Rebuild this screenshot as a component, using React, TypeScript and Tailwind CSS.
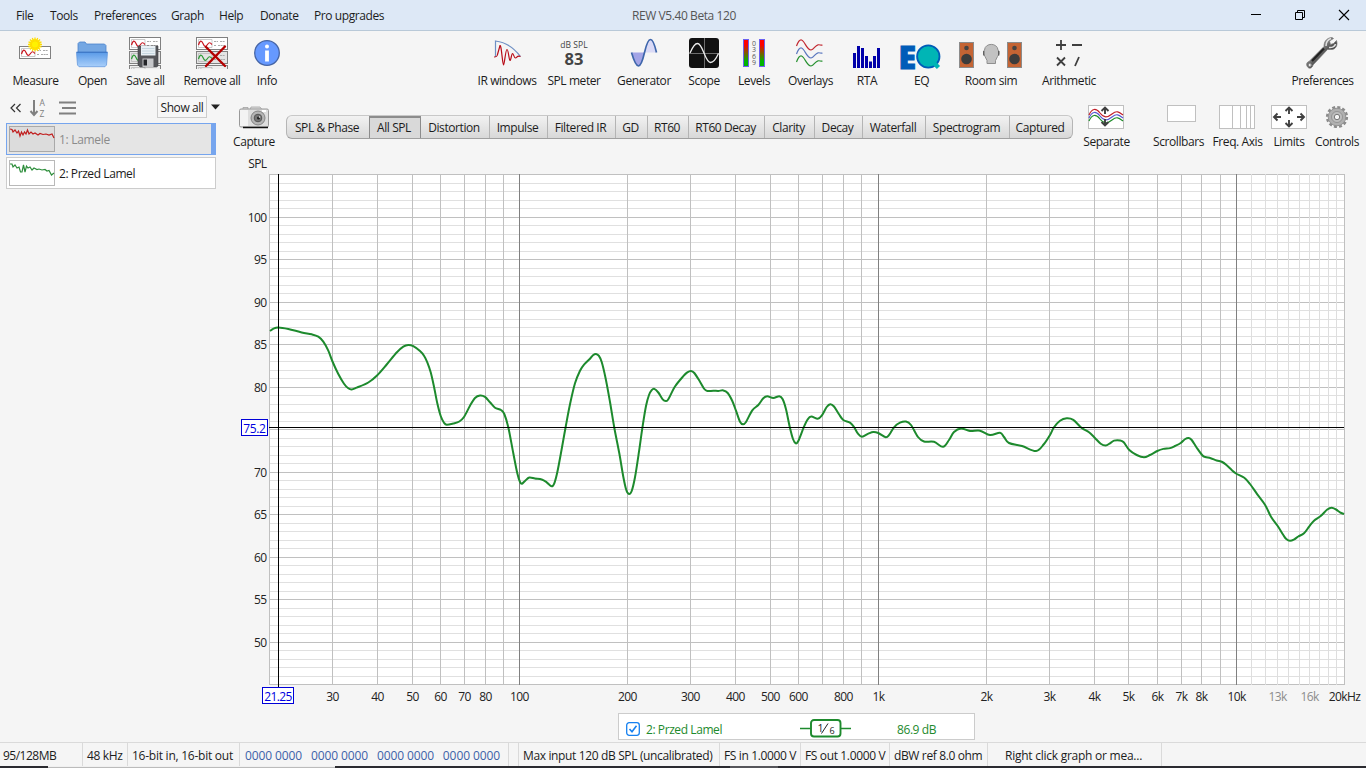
import type { ReactNode } from "react";

const MENU = [
  { name: "File", width: "w-[18px]" },
  { name: "Tools", width: "w-[28px]" },
  { name: "Preferences", width: "w-[61px]" },
  { name: "Graph", width: "w-[32px]" },
  { name: "Help", width: "w-[25px]" },
  { name: "Donate", width: "w-[38px]" },
  { name: "Pro upgrades", width: "w-[70px]" },
];

const TABS = [
  { name: "SPL & Phase", width: "w-[83px]" },
  { name: "All SPL", width: "w-[52px]" },
  { name: "Distortion", width: "w-[68px]" },
  { name: "Impulse", width: "w-[58px]" },
  { name: "Filtered IR", width: "w-[68px]" },
  { name: "GD", width: "w-[32px]" },
  { name: "RT60", width: "w-[41px]" },
  { name: "RT60 Decay", width: "w-[76px]" },
  { name: "Clarity", width: "w-[50px]" },
  { name: "Decay", width: "w-[48px]" },
  { name: "Waterfall", width: "w-[63px]" },
  { name: "Spectrogram", width: "w-[84px]" },
  { name: "Captured", width: "w-[64px]" },
];

const CURVE: [number, number][] = [
  [270, 331], [273.5, 328.6], [278.3, 327.5], [288.3, 329], [301.7, 332.4], [311.7, 334.3], [318.3, 336.7], [323.3, 341.7],
  [328.3, 350.7], [332.7, 362], [338.3, 374], [344, 383.7], [348.3, 388.3], [351.7, 389.5], [356.7, 387.7], [368.3, 382.5],
  [377.3, 375.2], [386.7, 364.5], [396.7, 352.5], [403.3, 346.7], [408.3, 345], [413.3, 346.2], [420, 351], [424, 355.7],
  [427.3, 362.3], [430.7, 372.3], [434, 386.7], [437.3, 403.3], [440.7, 416], [444, 422.7], [446.7, 424.8], [453.3, 423.5],
  [459.3, 421.5], [464, 417], [470, 405.7], [475, 398], [480, 395.5], [485, 396.9], [490, 402.3], [495, 407.7],
  [501, 410], [504.3, 414], [508.3, 427.3], [513.3, 453.3], [517.3, 473.3], [520, 482], [522, 483.7], [525, 480.9],
  [529.3, 477.5], [535, 478.5], [541.7, 479.5], [546.7, 482.3], [551.7, 486.3], [554.3, 483.3], [557.3, 472.3], [561.7, 449],
  [565.7, 426.7], [570, 404.3], [575, 383.3], [580, 370.7], [584, 364.7], [590, 358.7], [593.3, 355], [596, 353.9],
  [598.7, 355.6], [601.7, 362], [605.7, 378.7], [610, 402], [614.3, 427.7], [619.3, 453.3], [623.3, 476.7], [626.3, 490],
  [629, 494], [631.7, 491], [635, 477.3], [639, 451.7], [642.3, 428.3], [646, 406], [649, 395], [651.7, 390.2],
  [654.3, 388.9], [658.3, 392.5], [662.7, 399.3], [665.7, 401], [668.3, 399.3], [675, 386.5], [683.3, 376.2], [687.3, 372.4],
  [691, 371], [694.3, 373], [700, 381.7], [704.3, 389], [707.3, 391], [713.3, 390.7], [718.3, 390.9], [723.3, 390.4],
  [727.7, 393], [732.3, 401], [736, 410.7], [740, 421.7], [743, 424.3], [746, 422], [752.3, 410.3], [758.3, 405],
  [763.3, 398.3], [767.3, 396.3], [773.3, 398], [779.3, 396.2], [782.7, 399.3], [786, 409.3], [789.7, 426.7], [793, 439],
  [795.7, 443.3], [798.3, 441], [804, 426.7], [807.7, 419.3], [811.3, 416.6], [817.7, 418.7], [821.7, 415.7], [826.7, 407],
  [830.3, 404.2], [834, 406.5], [839, 414.3], [843.3, 420], [850, 422.7], [854, 427], [858, 433.7], [862, 436.7],
  [868.3, 433.7], [873.3, 431.9], [878.3, 433], [885.7, 437.3], [889.3, 434.7], [894, 427.3], [900, 422.7], [906, 421.5],
  [911, 425], [918, 437], [924, 441.5], [934, 441.8], [943, 446.8], [949, 440], [954, 432], [961, 428.5],
  [970, 431], [980, 430.7], [990, 435], [1000, 432.8], [1004, 437], [1009, 443], [1022, 446], [1036, 451], [1044, 444],
  [1050, 435], [1054, 427.3], [1060, 420.7], [1066.7, 418.3], [1073.3, 419.9], [1081.7, 428], [1089, 432.3], [1094.7, 437.7],
  [1100.7, 443.7], [1105.7, 445.5], [1110, 443.3], [1114, 440.6], [1120, 440.4], [1123.7, 442.3], [1129.3, 450], [1136.7, 455],
  [1144, 457.3], [1150, 455], [1157.3, 451], [1163.3, 448.9], [1170, 448.1], [1175, 446], [1180.7, 443], [1185.3, 439],
  [1188.7, 438], [1191.7, 440], [1196.7, 447.7], [1202.3, 455.3], [1205.3, 457], [1210.7, 458.2], [1216.7, 460.5], [1222.3, 462],
  [1226.7, 465.3], [1231.7, 470], [1236, 473.5], [1244.3, 477.7], [1250, 484], [1257.3, 494.3], [1265, 504.7], [1271, 516.7],
  [1277.7, 526], [1283.3, 535], [1286.3, 539], [1290, 540.8], [1294.3, 539.3], [1298.3, 536.5], [1304, 533.3], [1309.3, 526.3],
  [1314, 520.7], [1320.7, 516], [1327.3, 509.5], [1331.7, 507.8], [1336, 509.5], [1340, 512.3], [1344, 514],
];

// Catmull-Rom spline through the measured points
function smoothPath(pts: [number, number][]) {
  let d = `M${pts[0][0]} ${pts[0][1]}`;
  for (let i = 0; i < pts.length - 1; i++) {
    const p0 = pts[i - 1] ?? pts[i];
    const p1 = pts[i];
    const p2 = pts[i + 1];
    const p3 = pts[i + 2] ?? p2;
    d += `C${p1[0] + (p2[0] - p0[0]) / 6} ${p1[1] + (p2[1] - p0[1]) / 6} ${p2[0] - (p3[0] - p1[0]) / 6} ${p2[1] - (p3[1] - p1[1]) / 6} ${p2[0]} ${p2[1]}`;
  }
  return d;
}

const freqX = (f: number) => Math.round(269 + (1075 / 3) * Math.log10(f / 20));
const splY = (db: number) => Math.floor(217 + (100 - db) * 8.5);

const FREQS = [30, 40, 50, 60, 70, 80, 90, 100, 200, 300, 400, 500, 600, 700, 800, 900, 1000, 2000, 3000, 4000, 5000, 6000, 7000, 8000, 9000, 10000];
const MINOR_FREQS = [11000, 12000, 13000, 14000, 15000, 16000, 17000, 18000, 19000];
const LEVELS = Array.from({ length: 61 }, (_, i) => 105 - i);
const FREQ_LABELS: [number, string][] = [
  [30, "30"], [40, "40"], [50, "50"], [60, "60"], [70, "70"], [80, "80"], [100, "100"], [200, "200"], [300, "300"],
  [400, "400"], [500, "500"], [600, "600"], [800, "800"], [1000, "1k"], [2000, "2k"], [3000, "3k"], [4000, "4k"],
  [5000, "5k"], [6000, "6k"], [7000, "7k"], [8000, "8k"], [10000, "10k"], [13000, "13k"], [16000, "16k"], [20000, "20kHz"],
];

function Icon({ w = 32, h = 32, children }: { w?: number; h?: number; children: ReactNode }) {
  return (
    <svg width={w} height={h} viewBox={`0 0 ${w} ${h}`} fill="none" className="block shrink-0">
      {children}
    </svg>
  );
}

function MiniCard({ y, wave, fill = "#fff" }: { y: number; wave: string; fill?: string }) {
  return (
    <g transform={`translate(0 ${y})`}>
      <rect x="0.5" y="0.5" width="31" height="12" fill={fill} stroke="#808080" />
      <path d="M2.5 2.5H16V10.5H2.5Z" stroke="#b5b5b5" strokeWidth="0.7" />
      <path d="M2.5 8C4 3 5.500 3 7 6.500S9.500 10.500 11.500 7.500 14.500 6 16 7.500" stroke={wave} strokeWidth="1.2" />
      <path d="M18 4.500h4M24 4.500h5M18 8.500h2M22 8.500h7" stroke="#aaa" strokeDasharray="2 0.6" />
    </g>
  );
}

function MeasureIcon() {
  return (
    <Icon>
      <MiniCard y={9} wave="#c8141e" />
      <circle cx="16" cy="7.500" r="5.500" fill="#ffee00" />
      <path d="M16 0.500v14M9 7.500h14M11 2.500l10 10M21 2.500l-10 10M13.300 1l5.400 13M18.700 1l-5.400 13M9.500 4.800l13 5.400M9.500 10.200l13-5.400" stroke="#ffdc00" strokeWidth="1.300" />
      <circle cx="16" cy="7.500" r="3" fill="#fff200" />
    </Icon>
  );
}

function OpenIcon() {
  return (
    <Icon>
      <defs>
        <linearGradient id="folder" x1="0" y1="0" x2="0" y2="1">
          <stop offset="0" stopColor="#5b9be8" />
          <stop offset="1" stopColor="#a9cffa" />
        </linearGradient>
      </defs>
      <path d="M2 16V6.500L3.500 5H9L10.500 7H28.500L30 8.500V16Z" fill="#74a7e3" stroke="#4d83cb" strokeWidth="0.800" />
      <path d="M0.500 15.500H31.500L30.500 28L29 29.700H3L1.500 28Z" fill="url(#folder)" stroke="#679bdd" strokeWidth="0.800" />
      <path d="M0.500 15.200H31.500" stroke="#2f6cc0" />
    </Icon>
  );
}

function CardStack() {
  return (
    <>
      <MiniCard y={0} wave="#c8141e" />
      <MiniCard y={14} wave="#2c9a35" fill="#e4e4e4" />
      <MiniCard y={28} wave="#aaa" fill="#eee" />
    </>
  );
}

function SaveIcon() {
  return (
    <Icon>
      <CardStack />
      <path d="M9 9H29V29L27.500 30H11L9 28Z" fill="#55565a" stroke="#404144" strokeWidth="0.600" />
      <path d="M12 9H26.500V18.500H12Z" fill="#e9f0f5" />
      <path d="M13 11.500h12.500M13 14h12.500M13 16.500h12.500" stroke="#bdd0da" strokeWidth="0.800" />
      <path d="M13.500 21.500H24.500V30H13.500Z" fill="#c6c7ca" />
      <path d="M14.500 22.500H18V28.500H14.500Z" fill="#242529" />
    </Icon>
  );
}

function RemoveIcon() {
  return (
    <Icon>
      <CardStack />
      <path d="M10 10L29 29M29 9.500L10 29" stroke="#b40000" strokeWidth="2.400" strokeLinecap="round" />
    </Icon>
  );
}

function InfoIcon() {
  return (
    <Icon>
      <circle cx="16" cy="16" r="12.300" fill="#6699ff" stroke="#4564a5" strokeWidth="1.300" />
      <circle cx="16" cy="9.500" r="2" fill="#fff" />
      <path d="M16 13.500V24.500" stroke="#fff" strokeWidth="3.800" />
    </Icon>
  );
}

function IrIcon() {
  return (
    <Icon>
      <path d="M4.500 20V4C14 5 23 11 29.500 19.500" stroke="#6e8fc4" strokeWidth="1.200" />
      <path d="M3 20C5 20 6 20 6.500 17.500L9 8.500C10.500 8 11.500 28 12.500 28S14.500 12.500 16 12.500 18 23.500 19 23.500 20.500 16.500 21.500 16.500 23 21 24.500 21 26 18 29.500 19.500" stroke="#b80c18" strokeWidth="1.200" />
    </Icon>
  );
}

function GeneratorIcon() {
  return (
    <Icon>
      <path d="M4 15.500C6 24 8 29 10.500 29S15 22 16.500 15.500Z" fill="#a3a4e6" />
      <path d="M16.500 15.500C18 9 20 2.500 22.500 2.500S27 9 28.500 15.500Z" fill="#dadaf6" />
      <path d="M3.500 15.500C6 24 8 29 10.500 29S15 22 16.500 15.500 20 2.500 22.500 2.500 27 9 28.500 15.500" stroke="#3e66ab" strokeWidth="1.700" />
    </Icon>
  );
}

function ScopeIcon() {
  return (
    <Icon>
      <rect x="1" y="1" width="30" height="30" rx="3" fill="#111" />
      <path d="M1 16.500H31M16.500 1V31" stroke="#6d6d6d" />
      <path d="M2 16C5 9 7 6.500 9.500 6.500 15 6.500 17 25.500 22.500 25.500 26 25.500 28 22 30.500 16.500" stroke="#eee" strokeWidth="1.300" />
    </Icon>
  );
}

function LevelsIcon() {
  return (
    <Icon>
      <defs>
        <linearGradient id="level" x1="0" y1="0" x2="0" y2="1">
          <stop offset="0.200" stopColor="#ff0000" />
          <stop offset="0.800" stopColor="#00b400" />
        </linearGradient>
      </defs>
      <rect x="5.500" y="2.500" width="5" height="27" fill="url(#level)" stroke="#6b61f0" />
      <rect x="21.500" y="2.500" width="5" height="27" fill="url(#level)" stroke="#6b61f0" />
      {["0", "3", "6", "9"].map((n, i) => (
        <text key={n} x="16" y={9 + i * 6.300} textAnchor="middle" fill="#555" className="font-['Open_Sans',sans-serif] text-[7px] tracking-normal">{n}</text>
      ))}
    </Icon>
  );
}

function OverlaysIcon() {
  const wave = "M2.500 9C4 5 5.500 2.500 7.500 3 11 4 12.500 13 17 13 20 12.500 21 8.500 24 7.800 26 7.500 27 8.500 28.500 8";
  return (
    <Icon>
      <path d={wave} stroke="#c22931" strokeWidth="1.200" />
      <path d={wave} stroke="#5a77bf" strokeWidth="1.200" transform="translate(0 8)" />
      <path d={wave} stroke="#279130" strokeWidth="1.200" transform="translate(0 16)" />
    </Icon>
  );
}

function RtaIcon() {
  const heights = [15, 22, 20, 12, 6.500, 12, 20];
  return (
    <Icon>
      {heights.map((h, i) => (
        <rect key={i} x={2 + i * 4} y={31 - h} width="3" height={h} fill="#0000aa" />
      ))}
    </Icon>
  );
}

function EqIcon() {
  return (
    <svg width="42" height="32" viewBox="0 0 42 32" fill="none" className="block shrink-0 overflow-visible">
      <text x="-1.500" y="31.500" fill="#005cb8" stroke="#005cb8" strokeWidth="1" className="text-[32px] font-extrabold tracking-normal">E</text>
      <circle cx="28.300" cy="19.500" r="11.200" fill="#00b5b5" stroke="#005cb8" strokeWidth="1.800" />
      <path d="M33 25L38.500 30.500" stroke="#00b5b5" strokeWidth="4.500" />
    </svg>
  );
}

function Speaker({ x }: { x: number }) {
  return (
    <g transform={`translate(${x} 0)`}>
      <rect x="0.500" y="5.500" width="14" height="25" fill="#c46434" stroke="#8b8b8b" />
      <circle cx="7.500" cy="11" r="2.300" fill="#444" />
      <circle cx="7.500" cy="22" r="5.300" fill="#3c3c3c" />
    </g>
  );
}

function RoomIcon() {
  return (
    <Icon w={64}>
      <Speaker x={0} />
      <path d="M25.500 13C26 5.500 38.500 5.500 39 13L40 14.500V17L38.500 19.500L36.500 23.500V26.500H28V23.500L26 19.500L24.500 17V14.500Z" fill="#c2c2c2" stroke="#8f8f8f" />
      <path d="M24.800 14v4.500M39.700 14v4.500" stroke="#555" strokeWidth="1.200" />
      <Speaker x={48} />
    </Icon>
  );
}

function ArithmeticIcon() {
  return (
    <Icon>
      <path d="M3 8h10M8 3v10M19 8h10M4 20.500l8 8M12 20.500l-8 8M26 20l-4 9" stroke="#3f3f3f" strokeWidth="1.800" />
    </Icon>
  );
}

function WrenchIcon() {
  return (
    <Icon>
      <defs>
        <linearGradient id="steel" x1="0" y1="0" x2="1" y2="1">
          <stop offset="0.300" stopColor="#9c9c9c" />
          <stop offset="0.600" stopColor="#444" />
        </linearGradient>
      </defs>
      <path d="M1 29C0 27 1 25 3 24.500L18 9.500C18 5 20 1 26 0.500L27.500 1.500L23.500 4L24.500 7.500L27.500 6.500L30.500 3.500C32 8 30 12 26 12.500L21.500 12.500L7 28C6.500 31 3 33 1 29Z" fill="url(#steel)" stroke="#777" strokeWidth="0.700" />
      <path d="M18 11.500L6 24" stroke="#222" strokeWidth="2.200" />
      <path d="M20 9C20 5 22 2.500 25 1.500M23 10.500C26 11 29 9.500 29.500 7" stroke="#e0e0e0" strokeWidth="1.500" />
      <circle cx="3.800" cy="28" r="1.500" fill="#eee" stroke="#888" />
    </Icon>
  );
}

function SeparateIcon() {
  const wave = "M1 10C4 3 8 3 12 8S19 13 24 9 31 7 35 10";
  return (
    <Icon w={36} h={24}>
      <rect x="0.500" y="0.500" width="35" height="23" fill="#fff" stroke="#c0c0c0" />
      <path d={wave} stroke="#c21f28" strokeWidth="1.200" />
      <path d={wave} stroke="#5757d0" strokeWidth="1.200" transform="translate(0 3)" />
      <path d={wave} stroke="#1d8c28" strokeWidth="1.200" transform="translate(0 6)" />
      <path d="M17 9V2.500M13.500 6L17 2.500L20.500 6M17 14V20.500M13.500 17L17 20.500L20.500 17" stroke="#404040" strokeWidth="1.900" />
    </Icon>
  );
}

function ScrollbarsIcon() {
  return (
    <Icon w={36} h={24}>
      <rect x="7.500" y="0.500" width="28" height="16" fill="#fff" stroke="#c0c0c0" />
    </Icon>
  );
}

function AxisIcon() {
  return (
    <Icon w={36} h={24}>
      <rect x="0.500" y="0.500" width="35" height="23" fill="#fff" stroke="#c0c0c0" />
      <path d="M13.500 0V24M21.500 0V24M27.500 0V24M31.500 0V24" stroke="#c0c0c0" />
    </Icon>
  );
}

function LimitsIcon() {
  return (
    <Icon w={36} h={24}>
      <rect x="0.500" y="0.500" width="35" height="23" fill="#fff" stroke="#c0c0c0" />
      <path d="M18 9V2.500M14.500 6L18 2.500L21.500 6M18 15V21.500M14.500 18L18 21.500L21.500 18M10 12H3M6.500 8.500L3 12L6.500 15.500M26 12H33M29.500 8.500L33 12L29.500 15.500" stroke="#404040" strokeWidth="1.900" />
    </Icon>
  );
}

function GearIcon() {
  return (
    <Icon w={24} h={24}>
      <circle cx="12" cy="12" r="9.800" stroke="#8b8b8b" strokeWidth="2.600" strokeDasharray="3 2.130" />
      <circle cx="12" cy="12" r="8.800" fill="#b0b0b0" stroke="#929292" />
      <circle cx="12" cy="12" r="5.500" fill="#bebebe" stroke="#8b8b8b" strokeWidth="0.800" />
      <circle cx="12" cy="12" r="2.700" fill="#f5f5f5" stroke="#777" />
    </Icon>
  );
}

function CameraIcon() {
  return (
    <Icon w={32} h={24}>
      <path d="M5 2.500h5v2H5ZM13 2h9l2 2.500H12Z" fill="#ddd" stroke="#999" strokeWidth="0.700" />
      <rect x="1.500" y="4" width="29" height="18" rx="1.500" fill="#dedede" stroke="#999" />
      <path d="M2 5H10V21H2Z" fill="#f3f3f3" />
      <path d="M24 6h4" stroke="#fff" strokeWidth="2" />
      <circle cx="20" cy="13" r="7" fill="#b5b5b5" stroke="#858585" />
      <circle cx="20" cy="13" r="3.800" fill="#777" stroke="#555" />
      <circle cx="20.500" cy="13" r="1.500" fill="#222" />
      <circle cx="21.500" cy="12" r="0.800" fill="#eee" />
      <path d="M5 22.500H30" stroke="#111" strokeWidth="1.500" />
    </Icon>
  );
}

function Tool({ label, className, children }: { label: string; className: string; children: ReactNode }) {
  return (
    <button className={`flex shrink-0 flex-col items-center ${className}`}>
      {children}
      <span className="mt-1 leading-4">{label}</span>
    </button>
  );
}

function TitleBar() {
  return (
    <header className="flex h-[31px] shrink-0 items-center border-b border-[#b9c9d8] bg-[#dde8f6] pl-4">
      <nav className="flex w-[616px] gap-4 pt-px">
        {MENU.map((m) => (
          <span key={m.name} className={m.width}>{m.name}</span>
        ))}
      </nav>
      <div className="flex-1 pt-px text-[#555]">REW V5.40 Beta 120</div>
      <div className="flex items-center gap-8 pr-4">
        <svg width="12" height="12" viewBox="0 0 12 12"><path d="M1 5.500H11" stroke="#000" /></svg>
        <svg width="12" height="12" viewBox="0 0 12 12" fill="none" stroke="#000"><path d="M1.500 3.500H8.500V10.500H1.500ZM3.500 3.500V1.500H10.500V8.500H8.500" /></svg>
        <svg width="12" height="12" viewBox="0 0 12 12"><path d="M1 1L11 11M11 1L1 11" stroke="#000" strokeWidth="1.100" /></svg>
      </div>
    </header>
  );
}

function Toolbar() {
  return (
    <div className="flex h-[62px] shrink-0 pt-1.5 pl-[7px]">
      <Tool label="Measure" className="w-[57px] [&>svg]:mr-px"><MeasureIcon /></Tool>
      <Tool label="Open" className="w-[57px] [&>svg]:mr-px"><OpenIcon /></Tool>
      <Tool label="Save all" className="w-[49px] [&>svg]:mr-px"><SaveIcon /></Tool>
      <Tool label="Remove all" className="w-[84px]"><RemoveIcon /></Tool>
      <Tool label="Info" className="w-[26px]"><InfoIcon /></Tool>
      <Tool label="IR windows" className="ml-[187px] w-[80px]"><IrIcon /></Tool>
      <Tool label="SPL meter" className="w-[54px]">
        <div className="flex h-8 flex-col items-center text-[#444]">
          <span className="mt-[2px] text-[8.5px] leading-3 tracking-[0.1px]">dB SPL</span>
          <span className="text-[16.5px] leading-4 font-bold tracking-normal">83</span>
        </div>
      </Tool>
      <Tool label="Generator" className="w-[86px]"><GeneratorIcon /></Tool>
      <Tool label="Scope" className="w-[34px]"><ScopeIcon /></Tool>
      <Tool label="Levels" className="w-[66px]"><LevelsIcon /></Tool>
      <Tool label="Overlays" className="w-[47px] [&>svg]:mr-px"><OverlaysIcon /></Tool>
      <Tool label="RTA" className="w-[66px]"><RtaIcon /></Tool>
      <Tool label="EQ" className="w-[43px] [&>svg]:mr-px"><EqIcon /></Tool>
      <Tool label="Room sim" className="w-[96px]"><RoomIcon /></Tool>
      <Tool label="Arithmetic" className="w-[60px]"><ArithmeticIcon /></Tool>
      <Tool label="Preferences" className="ml-auto w-[87px] [&>svg]:mr-px"><WrenchIcon /></Tool>
    </div>
  );
}

function Sidebar() {
  return (
    <aside className="flex w-[230px] shrink-0 flex-col pt-[3px] pl-1.5">
      <div className="flex h-[22px] items-center">
        <svg width="72" height="22" viewBox="0 0 72 22" fill="none" className="shrink-0 overflow-visible">
          <path d="M9 8L5 12L9 16M14.500 8L10.500 12L14.500 16" stroke="#333" strokeWidth="1.200" />
          <path d="M28 4V19M24.500 15L28 19L31.500 15" stroke="#808080" strokeWidth="2" />
          <text x="33.500" y="10" fill="#808080" className="text-[8.5px]">A</text>
          <text x="33.500" y="20.500" fill="#808080" className="text-[8.5px]">Z</text>
          <path d="M53 6.500H70M56 12H70M53 17.500H70" stroke="#808080" strokeWidth="1.800" />
        </svg>
        <span className="ml-[79px] flex h-[22px] w-[50px] shrink-0 items-center justify-center border border-[#ccc] bg-[#f7f7f7] pt-px">Show all</span>
        <svg width="10" height="6" viewBox="0 0 10 6" className="ml-1 shrink-0"><path d="M0 0.500H9L4.500 5.500Z" fill="#222" /></svg>
      </div>
      <div className="mt-[5px] flex h-8 w-[210px] items-center border border-[#76a5ee] bg-[#e5e5e5] text-[#8b8b8b]">
        <svg width="46" height="26" viewBox="0 0 46 26" fill="none" className="ml-0.5">
          <rect x="0.500" y="0.500" width="45" height="25" fill="#dcdcdc" stroke="#a9a9a9" />
          <path d="M1 3L3 3.500 4 6 6 4 8 7 9.500 5 11 10 12.500 6 14 9 15.500 6 17 8 18.500 4 20 8 22 6 24 8 26 7 29 9 31 7.500 34 8.500 37 8 40 9 43 8 45 12" stroke="#c01d1d" strokeWidth="1.200" />
        </svg>
        <span className="ml-1 flex-1 pt-px tracking-[-0.3px]">1: Lamele</span>
        <span className="h-full w-1 bg-[#76a5ee]" />
      </div>
      <div className="mt-0.5 flex h-8 w-[210px] items-center border border-[#ccc] bg-white">
        <svg width="46" height="26" viewBox="0 0 46 26" fill="none" className="ml-0.5">
          <rect x="0.500" y="0.500" width="45" height="25" fill="#fff" stroke="#b9b9b9" />
          <path d="M1 4L3 4 4 7 6 5 8 8 10 7 11.500 12 13 12 14.500 5 16 12 17.500 6 19 8 21 7 23 10 25 8 28 9.500 30 9 33 10 36 9.500 38 11 40 10.500 42.500 15 45 13" stroke="#2d8e3b" strokeWidth="1.200" />
        </svg>
        <span className="ml-1 pt-px">2: Przed Lamel</span>
      </div>
    </aside>
  );
}

function GraphBar() {
  return (
    <div className="flex h-[62px] shrink-0 pt-3 [&>button>span]:mt-[5px]">
      <Tool label="Capture" className="w-[48px]"><CameraIcon /></Tool>
      <div className="mt-2.5 ml-2 flex h-6 shrink-0 overflow-hidden rounded-md border border-[#b5b5b5] border-t-[#c8c8c8] border-b-[#a0a0a0] bg-linear-to-b from-[#f2f2f2] to-[#d8d8d8]">
        {TABS.map((t, i) => (
          <button
            key={t.name}
            className={`${t.width} shrink-0 pt-px pr-0.5 first:w-[82px] last:w-[63px] ${i === 1 ? "border-x border-t-2 border-[#8c8c8c] bg-[#d9d9d9] pb-0.5" : i > 2 ? "border-l border-[#b4b4b4]" : ""}`}
          >
            {t.name}
          </button>
        ))}
      </div>
      <Tool label="Separate" className="ml-2 w-[51px] [&>svg]:mr-px"><SeparateIcon /></Tool>
      <Tool label="Scrollbars" className="ml-[21px] w-[51px] [&>svg]:mr-px"><ScrollbarsIcon /></Tool>
      <Tool label="Freq. Axis" className="ml-[7px] w-[53px] [&>svg]:mr-px"><AxisIcon /></Tool>
      <Tool label="Limits" className="ml-1.5 w-[38px]"><LimitsIcon /></Tool>
      <Tool label="Controls" className="ml-[7px] w-[44px]"><GearIcon /></Tool>
    </div>
  );
}

function Chart() {
  return (
    <svg width="1136" height="555" viewBox="230 155 1136 555" className="block shrink-0 tracking-[-0.6px]" fill="#222">
      <rect x="269" y="174" width="1076" height="511" fill="#fff" />
      <g shapeRendering="crispEdges">
        {LEVELS.map((l) => (
          <rect key={l} x="269" y={splY(l)} width="1076" height="1" fill={l % 5 === 0 ? "#c0c0c0" : "#e0e0e0"} />
        ))}
        {MINOR_FREQS.map((f) => (
          <rect key={f} x={freqX(f)} y="174" width="1" height="511" fill="#dedede" />
        ))}
        {[20, ...FREQS, 20000].map((f) => (
          <rect key={f} x={freqX(f)} y="174" width="1" height="511" fill={[100, 1000, 10000].includes(f) ? "#808080" : "#c0c0c0"} />
        ))}
      </g>
      <path d={smoothPath(CURVE)} fill="none" stroke="#1d8a2d" strokeWidth="2" />
      <rect x="269" y="427" width="1075" height="1" fill="#000" />
      <rect x="278" y="174" width="1" height="513" fill="#000" />
      <text x="266.500" y="168" textAnchor="end">SPL</text>
      {[100, 95, 90, 85, 80, 70, 65, 60, 55, 50].map((l) => (
        <text key={l} x="266.500" y={splY(l) + 5} textAnchor="end">{l}</text>
      ))}
      {FREQ_LABELS.map(([f, label]) => (
        <text key={f} x={freqX(f) + 0.500} y="701" textAnchor="middle" fill={f === 13000 || f === 16000 ? "#8c8c8c" : "#222"}>{label}</text>
      ))}
      <rect x="241.500" y="419.500" width="26" height="16" fill="#fff" stroke="#0000d8" />
      <text x="254.300" y="433" textAnchor="middle" fill="#0000e0" className="tracking-[-0.4px]">75.2</text>
      <rect x="262.500" y="687.500" width="31" height="16" fill="#fff" stroke="#0000d8" />
      <text x="278" y="701" textAnchor="middle" fill="#0000e0">21.25</text>
    </svg>
  );
}

function Legend() {
  return (
    <div className="mt-[3px] ml-[388px] flex h-[27px] w-[357px] shrink-0 items-center border border-[#ccc] bg-white pt-1 text-[#1d8a2d]">
      <svg width="14" height="14" viewBox="0 0 14 14" fill="none" className="ml-[7px]">
        <rect x="0.700" y="0.700" width="12.600" height="12.600" rx="2.500" stroke="#1580f0" strokeWidth="1.300" />
        <path d="M3.500 7L6 9.800L10.500 3.800" stroke="#1580f0" strokeWidth="1.600" />
      </svg>
      <span className="ml-[6px] w-[154px] pt-0.5">2: Przed Lamel</span>
      <svg width="51" height="19" viewBox="0 0 51 19" fill="none">
        <path d="M0 9.500H10.500M40.500 9.500H51" stroke="#1d8a2d" strokeWidth="1.600" />
        <rect x="11" y="1" width="29.500" height="16.500" rx="3" fill="#fff" stroke="#1d8a2d" strokeWidth="1.900" />
        <text x="17.500" y="13" fill="#222" className="text-[10.5px]">1</text>
        <path d="M21.500 14.500L28 4.500" stroke="#222" />
        <text x="29.500" y="15" fill="#222" className="text-[9px]">6</text>
      </svg>
      <span className="ml-[46px] pt-0.5">86.9 dB</span>
    </div>
  );
}

function StatusBar() {
  const cell = "flex shrink-0 items-center border-r border-[#dadada] pt-0.5";
  return (
    <footer className="flex h-6 shrink-0 border-t border-[#dadada] tracking-[-0.36px]">
      <span className={`${cell} w-[83px] pl-[3px] tracking-[-0.5px]`}>95/128MB</span>
      <span className={`${cell} w-[45px] pl-1`}>48 kHz</span>
      <span className={`${cell} w-[112px] pl-1 tracking-[-0.25px]`}>16-bit in, 16-bit out</span>
      <span className={`${cell} w-[269px] justify-between pr-2 pl-[5px] tracking-[-0.1px] text-[#3c61a8]`}>
        <span>0000 0000</span>
        <span>0000 0000</span>
        <span>0000 0000</span>
        <span>0000 0000</span>
      </span>
      <span className={`${cell} w-[10px]`} />
      <span className={`${cell} w-[201px] pl-1`}>Max input 120 dB SPL (uncalibrated)</span>
      <span className={`${cell} w-[81px] pl-1`}>FS in 1.0000 V</span>
      <span className={`${cell} w-[89px] pl-1`}>FS out 1.0000 V</span>
      <span className={`${cell} w-[98px] pl-1`}>dBW ref 8.0 ohm</span>
      <span className={`${cell} w-[174px] pl-[17px] tracking-[-0.25px]`}>Right click graph or mea...</span>
    </footer>
  );
}

export default function App() {
  return (
    <div className="flex h-[768px] w-[1366px] flex-col overflow-hidden bg-[#f5f5f5] font-['Open_Sans',sans-serif] text-[12px] leading-4 tracking-[-0.42px] whitespace-nowrap text-[#1c1c1c]">
      <TitleBar />
      <Toolbar />
      <main className="flex h-[649px] shrink-0">
        <Sidebar />
        <section className="flex w-[1136px] flex-col">
          <GraphBar />
          <Chart />
          <Legend />
        </section>
      </main>
      <StatusBar />
      <div className="flex h-0.5 shrink-0 bg-[#2b2b30]">
        <span className="ml-12 w-[287px] border-b border-[#bbb] bg-[#f0f0f0]" />
        <span className="ml-[395px] w-12 bg-[#55555a]" />
      </div>
    </div>
  );
}
